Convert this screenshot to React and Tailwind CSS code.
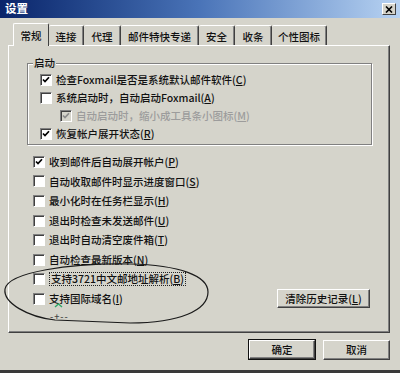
import React from 'react';

const tabs = [
  { label: '常规', w: 'w-[36px]', active: true },
  { label: '连接', w: 'w-[35px]' },
  { label: '代理', w: 'w-[37px]' },
  { label: '邮件特快专递', w: 'w-[78px]' },
  { label: '安全', w: 'w-[36px]' },
  { label: '收条', w: 'w-[37px]' },
  { label: '个性图标', w: 'w-[55px]' },
];

function CheckBox({ checked, disabled }) {
  return (
    <span
      className={`flex h-[12px] w-[12px] shrink-0 items-center justify-center border border-t-[#808080] border-l-[#808080] border-b-white border-r-white shadow-[inset_1px_1px_0_#404040] ${
        disabled ? 'bg-[#d5d4cb]' : 'bg-white'
      }`}
    >
      {checked && (
        <svg width="8" height="8" viewBox="0 0 8 8">
          <path d="M1 3.5 L3 5.6 L7 1.2" fill="none" stroke={disabled ? '#8c8c8c' : '#000'} strokeWidth="1.7" />
        </svg>
      )}
    </span>
  );
}

function Row({ checked, disabled, focus, children, h = 'h-[19.6px]', indent = '' }) {
  return (
    <div className={`flex items-center gap-[4px] ${h} ${indent}`}>
      <CheckBox checked={checked} disabled={disabled} />
      <span
        className={`${disabled ? 'text-[#9c9c9c]' : 'text-[#111]'} ${
          focus ? 'border border-dotted border-[#222] px-[1px] leading-[12px]' : ''
        }`}
      >
        {children}
      </span>
    </div>
  );
}

function Button({ children, primary, className = '' }) {
  return (
    <button
      className={`flex items-center justify-center bg-[#d5d4cb] text-[#111] border border-t-white border-l-white border-b-[#404040] border-r-[#404040] shadow-[inset_-1px_-1px_0_#808080] ${
        primary ? 'outline outline-1 outline-[#111]' : ''
      } ${className}`}
    >
      {children}
    </button>
  );
}

export default function App() {
  return (
    <div
      className="relative flex h-[373px] w-[400px] flex-col overflow-hidden border-b-[3px] border-b-[#3a3a3a] bg-[#d5d4cb] text-[10.5px] font-medium"
      style={{ fontFamily: '"Noto Sans CJK SC", "Noto Sans", sans-serif' }}
    >
      {/* 标题栏 */}
      <div className="flex h-[18px] shrink-0 items-center justify-between bg-gradient-to-r from-[#0a246a] via-[#4a74b8] to-[#b8d3f2] pl-[5px] pr-[4px]">
        <span className="text-[11.5px] font-bold text-white">设置</span>
        <span className="flex h-[12px] w-[14px] items-center justify-center bg-[#d5d4cb] border border-t-white border-l-white border-b-[#404040] border-r-[#404040]">
          <svg width="8" height="7" viewBox="0 0 8 7">
            <path d="M1 0.5 L7 6.5 M7 0.5 L1 6.5" stroke="#000" strokeWidth="1.6" />
          </svg>
        </span>
      </div>

      {/* 选项卡 */}
      <div className="ml-[13px] mt-[5px] flex h-[23px] shrink-0 items-end">
        {tabs.map((t) =>
          t.active ? (
            <div
              key={t.label}
              className={`relative z-10 flex h-[23px] ${t.w} items-center justify-center rounded-t-[2px] border-l border-t border-r border-t-white border-l-white border-r-[#404040] bg-[#d5d4cb] pt-[2px] text-[#111]`}
            >
              {t.label}
            </div>
          ) : (
            <div
              key={t.label}
              className={`mb-[1px] flex h-[20px] ${t.w} items-center justify-center rounded-t-[2px] border-t border-r border-t-white border-r-[#404040] pt-[3px] text-[#111] shadow-[inset_-1px_0_0_#808080]`}
            >
              {t.label}
            </div>
          )
        )}
      </div>

      {/* 面板 */}
      <div className="ml-[8px] -mt-[1px] h-[288px] w-[382px] shrink-0 border border-t-white border-l-white border-b-[#404040] border-r-[#404040] shadow-[inset_-1px_-1px_0_#808080]">
        <div className="relative ml-[18px] mt-[17px] h-[82px] w-[345px] border border-[#808080] pl-[12px] pt-[7px] shadow-[1px_1px_0_#fff,inset_1px_1px_0_#fff]">
          <span className="absolute -top-[8px] left-[5px] bg-[#d5d4cb] px-[1px] leading-[14px] text-[#111]">启动</span>
          <Row checked h="h-[18px]">检查Foxmail是否是系统默认邮件软件(<u>C</u>)</Row>
          <Row h="h-[18px]">系统启动时，自动启动Foxmail(<u>A</u>)</Row>
          <Row checked disabled h="h-[18px]" indent="pl-[20px]">
            自动启动时，缩小成工具条小图标(<u>M</u>)
          </Row>
          <Row checked h="h-[18px]">恢复帐户展开状态(<u>R</u>)</Row>
        </div>

        <div className="mt-[7px] pl-[24px]">
          <Row checked>收到邮件后自动展开帐户(<u>P</u>)</Row>
          <Row>自动收取邮件时显示进度窗口(<u>S</u>)</Row>
          <Row>最小化时在任务栏显示(<u>H</u>)</Row>
          <Row>退出时检查未发送邮件(<u>U</u>)</Row>
          <Row>退出时自动清空废件箱(<u>T</u>)</Row>
          <Row>自动检查最新版本(<u>N</u>)</Row>
          <Row focus>支持3721中文邮地址解析(<u>B</u>)</Row>
          <div className="flex h-[19.6px] items-center justify-between pr-[19px]">
            <Row>支持国际域名(<u>I</u>)</Row>
            <Button className="h-[19px] w-[93px]">清除历史记录(<u>L</u>)</Button>
          </div>
          <div className="flex h-[16px] items-center pl-[17px] text-[9px] leading-none tracking-[1px] text-[#444]">-+--</div>
        </div>
      </div>

      {/* 底部按钮 */}
      <div className="mt-[7px] flex justify-end gap-[8px] pr-[10px]">
        <Button primary className="h-[19px] w-[66px]">确定</Button>
        <Button className="h-[20px] w-[67px]">取消</Button>
      </div>

      {/* 手绘圈注 */}
      <svg className="pointer-events-none absolute left-0 top-0" width="400" height="373" viewBox="0 0 400 373">
        <path
          d="M130 264 C70 263 8 272 5 289 C3 303 28 317 55 320 L130 323 C180 323 208 310 208 292 C208 276 180 265 130 264 Z"
          fill="none"
          stroke="#1a1a1a"
          strokeWidth="1.2"
        />
        <path d="M55 307 L58.5 304 L62 307" fill="none" stroke="#2fa86a" strokeWidth="1.4" />
      </svg>
    </div>
  );
}
